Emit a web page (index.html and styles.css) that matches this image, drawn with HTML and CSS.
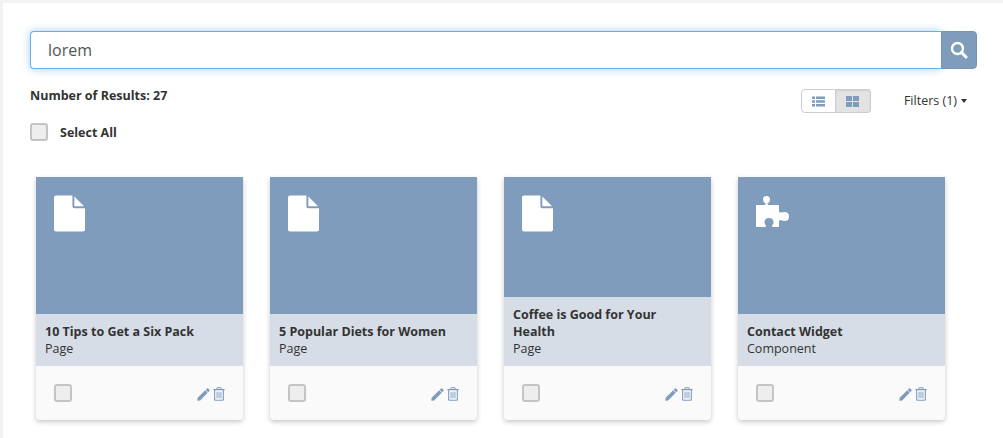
FILE: index.html
```html
<!DOCTYPE html>
<html lang="en">

<head>
	<meta charset="UTF-8">
	<meta name="viewport" content="width=device-width, initial-scale=1.0">
	<title>Search Results</title>
	<link rel="stylesheet" href="styles.css">
</head>

<body>
	<svg class="icon-defs" width="0" height="0">
		<symbol id="icon-pencil" viewBox="0 0 14 14">
			<path d="M3.400 13.400 L0.300 13.800 L0.700 10.600 L8.900 2.500 L11.500 5.100 Z M9.400 2 L10.800 0.600 Q11.400 0.100 12 0.600 L13.400 2 Q13.900 2.600 13.400 3.200 L12 4.600 Z"/>
		</symbol>
		<symbol id="icon-trash" viewBox="0 0 12 14">
			<path fill-rule="evenodd" d="M4 0.300 H8 L8.900 2 H11.600 V3.200 H10.900 V12.400 Q10.900 13.700 9.600 13.700 H2.400 Q1.100 13.700 1.100 12.400 V3.200 H0.400 V2 H3.100 Z M4.400 1.200 L4.100 2 H7.900 L7.600 1.200 Z M2.200 3.200 V12 Q2.200 12.700 2.900 12.700 H9.100 Q9.800 12.700 9.800 12 V3.200 Z M3.600 4.800 H4.500 V11.200 H3.600 Z M5.550 4.800 H6.450 V11.200 H5.550 Z M7.500 4.800 H8.400 V11.200 H7.500 Z"/>
		</symbol>
		<symbol id="icon-page" viewBox="0 0 32 37">
			<path d="M2 0 H19 V11 Q19 13 21 13 H32 V35 Q32 37 30 37 H2 Q0 37 0 35 V2 Q0 0 2 0 Z M21 1 L31 11 H21 Z"/>
		</symbol>
		<symbol id="icon-puzzle" viewBox="2 0 36 34">
			<path d="M2 10 H10 Q12 10 11.500 8.500 Q9 7 9 4.500 Q9 1 12.500 1 Q16 1 16 4.500 Q16 7 13.500 8.500 Q13 10 15 10 H25 V16 Q25 18 27 17.500 Q28.500 17 30.500 17 Q35 17 35 21.500 Q35 26 30.500 26 Q28.500 26 27 25 Q25 24.500 25 27 V32 H19.500 Q17.500 32 18 30.500 Q19.500 29 19.500 27.500 Q19.500 23 15 23 Q10.500 23 10.500 27.500 Q10.500 29 12 30.500 Q12.500 32 10.500 32 H2 Z"/>
		</symbol>
	</svg>

	<div class="panel">
		<!-- Search -->
		<div class="search">
			<input class="search-input" type="text" value="lorem">
			<button class="search-btn">
				<svg width="18" height="18" viewBox="0 0 18 18"><circle cx="7.500" cy="7.500" r="5.500" fill="none" stroke="#fff" stroke-width="2.400"/><path d="M11.500 11.500 L16 16" stroke="#fff" stroke-width="3" stroke-linecap="round"/></svg>
			</button>
		</div>

		<!-- Results toolbar -->
		<div class="toolbar">
			<div class="toolbar-left">
				<p class="result-count">Number of Results: 27</p>
				<label class="select-all"><span class="check"></span>Select All</label>
			</div>
			<div class="toolbar-right">
				<div class="view-toggle">
					<button class="view-btn">
						<svg width="13" height="11" viewBox="0 0 13 11"><path d="M0 0.500 H3 V3 H0 Z M4 0.500 H13 V3 H4 Z M0 4.250 H3 V6.750 H0 Z M4 4.250 H13 V6.750 H4 Z M0 8 H3 V10.500 H0 Z M4 8 H13 V10.500 H4 Z"/></svg>
					</button>
					<button class="view-btn active">
						<svg width="13" height="11" viewBox="0 0 13 11"><path d="M0 0 H6 V5 H0 Z M7 0 H13 V5 H7 Z M0 6 H6 V11 H0 Z M7 6 H13 V11 H7 Z"/></svg>
					</button>
				</div>
				<span class="filters">Filters (1)<span class="caret"></span></span>
			</div>
		</div>

		<!-- Cards -->
		<div class="cards">
			<div class="card">
				<div class="card-thumb"><svg class="thumb-icon" width="31" height="37"><use href="#icon-page"/></svg></div>
				<div class="card-info">
					<div class="card-title">10 Tips to Get a Six Pack</div>
					<div class="card-type">Page</div>
				</div>
				<div class="card-foot">
					<span class="check"></span>
					<span class="card-actions">
						<svg width="13" height="13"><use href="#icon-pencil"/></svg>
						<svg width="12" height="14"><use href="#icon-trash"/></svg>
					</span>
				</div>
			</div>
			<div class="card">
				<div class="card-thumb"><svg class="thumb-icon" width="31" height="37"><use href="#icon-page"/></svg></div>
				<div class="card-info">
					<div class="card-title">5 Popular Diets for Women</div>
					<div class="card-type">Page</div>
				</div>
				<div class="card-foot">
					<span class="check"></span>
					<span class="card-actions">
						<svg width="13" height="13"><use href="#icon-pencil"/></svg>
						<svg width="12" height="14"><use href="#icon-trash"/></svg>
					</span>
				</div>
			</div>
			<div class="card">
				<div class="card-thumb"><svg class="thumb-icon" width="31" height="37"><use href="#icon-page"/></svg></div>
				<div class="card-info">
					<div class="card-title">Coffee is Good for Your Health</div>
					<div class="card-type">Page</div>
				</div>
				<div class="card-foot">
					<span class="check"></span>
					<span class="card-actions">
						<svg width="13" height="13"><use href="#icon-pencil"/></svg>
						<svg width="12" height="14"><use href="#icon-trash"/></svg>
					</span>
				</div>
			</div>
			<div class="card">
				<div class="card-thumb"><svg class="thumb-icon" width="36" height="34"><use href="#icon-puzzle"/></svg></div>
				<div class="card-info">
					<div class="card-title">Contact Widget</div>
					<div class="card-type">Component</div>
				</div>
				<div class="card-foot">
					<span class="check"></span>
					<span class="card-actions">
						<svg width="13" height="13"><use href="#icon-pencil"/></svg>
						<svg width="12" height="14"><use href="#icon-trash"/></svg>
					</span>
				</div>
			</div>
		</div>
	</div>
</body>

</html>
```

FILE: styles.css
```css
html,
body
{
	height: 100%;
}

body
{
	margin: 0;
	padding: 3px 0 0 3px;
	box-sizing: border-box;
	overflow: hidden;
	font-family: "Open Sans", Arial, sans-serif;
	font-size: 13px;
	color: #333;
	background-color: #f3f3f3;
}

.icon-defs
{
	position: absolute;
}

.panel
{
	height: 100%;
	padding: 28px 26px 0 27px;
	box-sizing: border-box;
	background-color: white;
}

.search
{
	display: flex;
	height: 38px;
}

.search-input
{
	flex: 1;
	min-width: 0;
	padding: 0 17px;
	font-family: inherit;
	font-size: 16px;
	color: #555;
	background-color: white;
	border: 1px solid #66afe9;
	border-right: none;
	border-radius: 4px 0 0 4px;
	box-shadow: 0 0 8px rgba(102, 175, 233, 0.6);
	outline: none;
}

.search-btn
{
	width: 36px;
	padding: 0;
	display: flex;
	justify-content: center;
	align-items: center;
	background-color: #7f9cbc;
	border: 1px solid #7593b5;
	border-radius: 0 4px 4px 0;
}

.toolbar
{
	display: flex;
	justify-content: space-between;
	align-items: flex-start;
	margin-top: 18px;
}

.result-count
{
	margin: 0 0 19px;
	font-size: 12.500px;
	line-height: 17px;
	font-weight: 700;
}

.select-all
{
	display: flex;
	align-items: center;
	gap: 12px;
	font-size: 12.500px;
	font-weight: 700;
}

.check
{
	display: block;
	width: 14px;
	height: 14px;
	background-color: #eee;
	border: 2px solid #c4c4c4;
	border-radius: 3px;
}

.toolbar-right
{
	display: flex;
	align-items: center;
	margin-top: 2px;
}

.view-toggle
{
	display: flex;
}

.view-btn
{
	width: 35px;
	height: 24px;
	padding: 0;
	display: flex;
	justify-content: center;
	align-items: center;
	fill: #7f9cbc;
	background-color: white;
	border: 1px solid #ccc;
	border-radius: 4px 0 0 4px;
}

.view-btn.active
{
	background-color: #e3e3e3;
	border-left: none;
	border-radius: 0 4px 4px 0;
	box-shadow: inset 0 1px 2px rgba(0, 0, 0, 0.08);
}

.filters
{
	display: flex;
	align-items: center;
	margin: -2px 10px 0 33px;
	font-size: 12.500px;
}

.caret
{
	margin: 2px 0 0 4px;
	border-top: 4px solid #333;
	border-left: 3.500px solid transparent;
	border-right: 3.500px solid transparent;
}

.cards
{
	display: flex;
	gap: 27px;
	margin: 36px 0 0 6px;
}

.card
{
	width: 207px;
	height: 243px;
	display: flex;
	flex-direction: column;
	background-color: #fafafa;
	border-radius: 0 0 4px 4px;
	box-shadow: 0 2px 5px rgba(0, 0, 0, 0.22);
}

.card-thumb
{
	flex: 1;
	min-height: 0;
	padding: 18px 0 0 18px;
	background-color: #7f9cbc;
}

.thumb-icon
{
	display: block;
	fill: white;
}

.card-info
{
	padding: 9px 9px 9px;
	background-color: #d6dde7;
	line-height: 17px;
}

.card-title
{
	padding-right: 14px;
	font-size: 12.500px;
	font-weight: 700;
}

.card-type
{
	font-size: 12.500px;
}

.card-foot
{
	flex: none;
	height: 54px;
	padding: 0 16px 0 18px;
	box-sizing: border-box;
	display: flex;
	justify-content: space-between;
	align-items: center;
}

.card-actions
{
	display: flex;
	align-items: center;
	gap: 3px;
	margin: 2px 2px 0 0;
	fill: #7f9cbc;
}
```
